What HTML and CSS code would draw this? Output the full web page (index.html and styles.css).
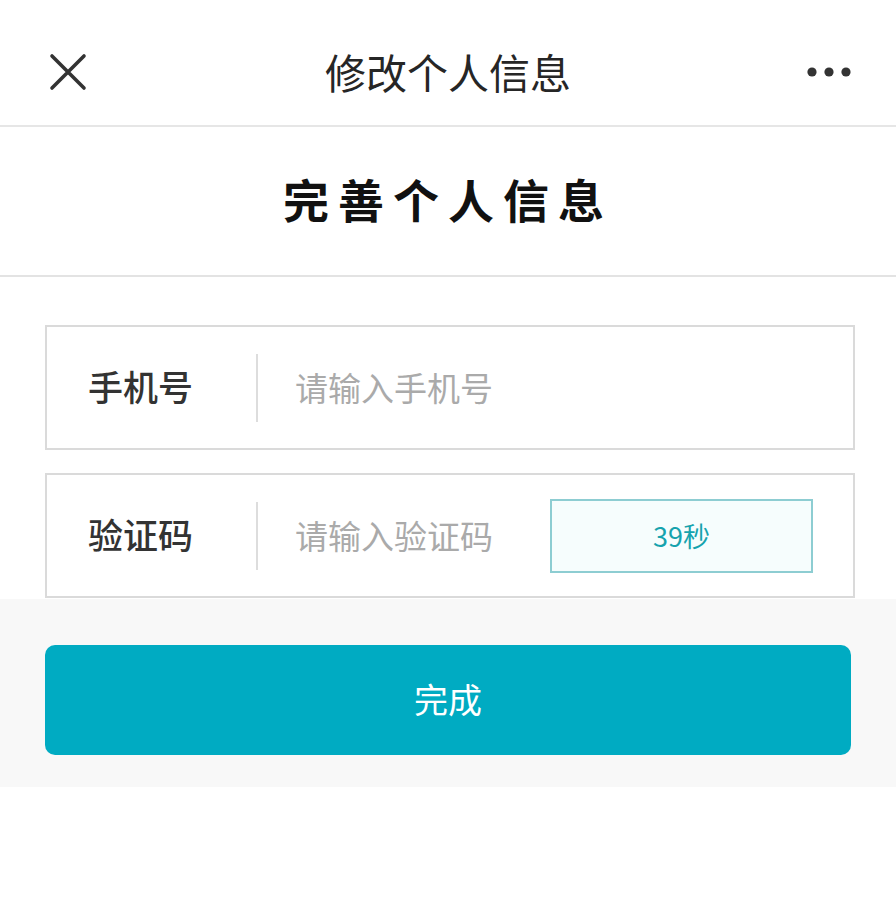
FILE: index.html
```html
<!DOCTYPE html>
<html lang="zh-CN">
<head>
<meta charset="utf-8">
<title>修改个人信息</title>
<link rel="stylesheet" href="styles.css">
</head>
<body>
<header class="topbar">
  <div class="close">
    <svg width="40" height="40" viewBox="0 0 40 40"><path d="M4 4 L36 36 M36 4 L4 36" stroke="#333" stroke-width="3.6" stroke-linecap="round" fill="none"/></svg>
  </div>
  <div class="top-title">修改个人信息</div>
  <div class="more">
    <svg width="46" height="12" viewBox="0 0 46 12"><circle cx="6" cy="6" r="4.6" fill="#333"/><circle cx="23" cy="6" r="4.6" fill="#333"/><circle cx="40" cy="6" r="4.6" fill="#333"/></svg>
  </div>
</header>
<section class="heading">
  <h1>完善个人信息</h1>
</section>
<section class="form">
  <div class="field">
    <div class="label">手机号</div>
    <div class="divider"></div>
    <div class="placeholder">请输入手机号</div>
  </div>
  <div class="field">
    <div class="label">验证码</div>
    <div class="divider"></div>
    <div class="placeholder">请输入验证码</div>
    <div class="code-btn">39秒</div>
  </div>
</section>
<section class="actions">
  <div class="submit">完成</div>
</section>
</body>
</html>
```

FILE: styles.css
```css
* { box-sizing: border-box; }
body {
  margin: 0;
  background: #fff;
  font-family: "Noto Sans CJK SC", "Noto Sans", sans-serif;
  color: #333;
}
.topbar {
  height: 127px;
  padding-top: 18px;
  border-bottom: 2px solid #e6e6e6;
  display: grid;
  grid-template-columns: 120px 1fr 120px;
  align-items: center;
}
.close {
  padding-left: 48px;
  display: flex;
  align-items: center;
}
.close svg { display: block; }
.top-title {
  text-align: center;
  font-size: 41px;
  line-height: 1;
  color: #262626;
}
.more {
  display: flex;
  justify-content: flex-end;
  padding-right: 44px;
}
.more svg { display: block; }
.heading {
  height: 150px;
  border-bottom: 2px solid #e3e3e3;
  display: flex;
  align-items: center;
  justify-content: center;
}
.heading h1 {
  margin: 0;
  font-size: 46px;
  font-weight: 700;
  letter-spacing: 9px;
  color: #111;
  line-height: 1;
  margin-top: -6px;
}
.form {
  padding: 48px 41px 0 45px;
  display: flex;
  flex-direction: column;
  gap: 23px;
}
.field {
  height: 125px;
  border: 2px solid #dadada;
  display: flex;
  align-items: center;
  padding-left: 41px;
  padding-right: 40px;
}
.label {
  font-size: 35px;
  font-weight: 500;
  color: #333;
  width: 168px;
  margin-top: -4px;
}
.divider {
  width: 2px;
  height: 68px;
  background: #dddddd;
}
.placeholder {
  font-size: 33px;
  color: #aaaaaa;
  padding-left: 37px;
  flex: 1;
  margin-top: -2px;
}
.code-btn {
  width: 263px;
  height: 74px;
  border: 2px solid #8dcdd2;
  background: #f6fdfd;
  color: #16a3ae;
  font-size: 27px;
  display: flex;
  align-items: center;
  justify-content: center;
}
.actions {
  background: #f8f8f8;
  padding: 46px 45px 32px;
  margin-top: 1px;
}
.submit {
  height: 110px;
  background: #00abc2;
  border-radius: 10px;
  color: #fff;
  font-size: 34px;
  display: flex;
  align-items: center;
  justify-content: center;
  padding-bottom: 4px;
}
```
